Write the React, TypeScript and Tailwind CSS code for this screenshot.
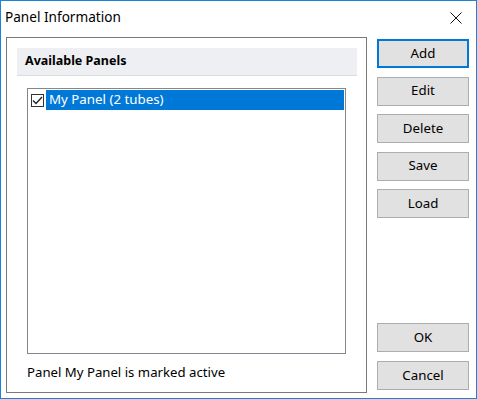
import React from "react";

const font = { fontFamily: '"Noto Sans", "Open Sans", sans-serif' };

function DlgButton({ label, primary }: { label: string; primary?: boolean }) {
  return (
    <button
      type="button"
      className={
        "h-[29px] w-[92px] bg-[#e1e1e1] text-[13.3px] leading-none text-black " +
        (primary ? "border-2 border-[#0078d7]" : "border border-[#adadad]")
      }
    >
      {label}
    </button>
  );
}

export default function App() {
  return (
    <div
      className="flex h-[399px] w-[477px] flex-col border border-[#1883d7] bg-white text-black"
      style={font}
    >
      {/* title bar */}
      <div className="flex h-[33px] shrink-0 items-center justify-between pb-[1px] pl-[4px] pr-[14px]">
        <span className="text-[13.6px]">Panel Information</span>
        <svg width="12" height="12" viewBox="0 0 12 12" className="mt-[1px]">
          <path d="M0.5 0.5L11.5 11.5M11.5 0.5L0.5 11.5" stroke="#111" strokeWidth="1" />
        </svg>
      </div>

      <div className="flex flex-1 pl-[5px] pt-[3px]">
        {/* group box */}
        <div className="flex h-[356px] w-[361px] flex-col border border-[#7a7a7a] pl-[10px] pr-[9px] pt-[10px]">
          <div className="flex h-[28px] shrink-0 items-center border-b border-[#dcdcdc] bg-[#eeeff2] pl-[8px]">
            <span className="text-[12.5px] font-bold">Available Panels</span>
          </div>

          <div className="ml-[10px] mr-[11px] mt-[12px] h-[266px] border border-[#828790] p-[1px]">
            <div className="flex h-[20px] items-center">
              <div className="ml-[2px] mr-[2px] flex h-[13px] w-[13px] items-center justify-center border border-[#333] bg-white">
                <svg width="11" height="11" viewBox="0 0 11 11">
                  <path d="M1 5.5L4 8.5L10 2" fill="none" stroke="#222" strokeWidth="1.4" />
                </svg>
              </div>
              <div className="flex h-[20px] flex-1 items-center bg-[#0078d7] pl-[3px] text-[13.3px] text-white">
                My Panel (2 tubes)
              </div>
            </div>
          </div>

          <div className="ml-[10px] mt-[9px] text-[13.2px]">Panel My Panel is marked active</div>
        </div>

        {/* buttons */}
        <div className="ml-[10px] flex flex-col pt-[2px]">
          <div className="flex flex-col gap-[8.5px]">
            <DlgButton label="Add" primary />
            <DlgButton label="Edit" />
            <DlgButton label="Delete" />
            <DlgButton label="Save" />
            <DlgButton label="Load" />
          </div>
          <div className="mt-[105px] flex flex-col gap-[9px]">
            <DlgButton label="OK" />
            <DlgButton label="Cancel" />
          </div>
        </div>
      </div>
    </div>
  );
}
